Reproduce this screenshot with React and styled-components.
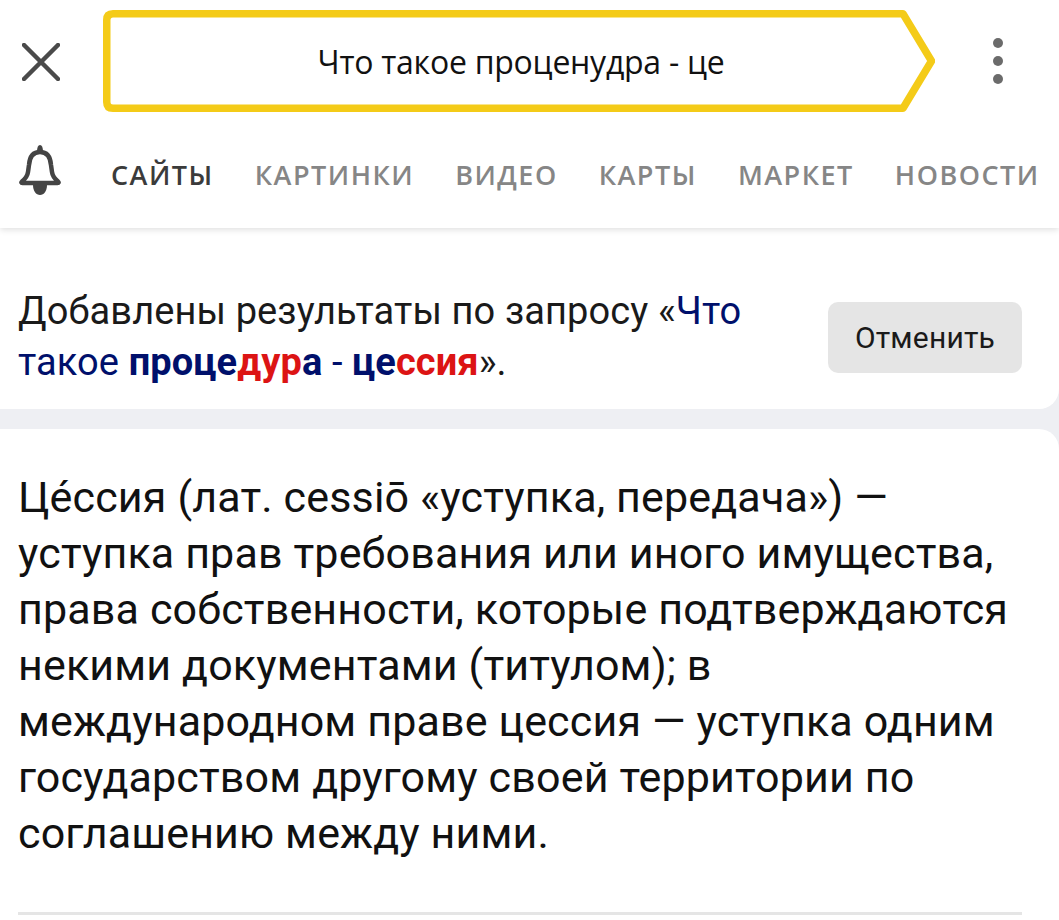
import React from 'react';
import styled, { createGlobalStyle } from 'styled-components';

const GlobalStyle = createGlobalStyle`
  html, body {
    margin: 0;
    padding: 0;
    background: #fff;
    overflow: hidden;
  }
  body {
    font-family: Roboto, "Liberation Sans", sans-serif;
  }
`;

const Page = styled.div`
  width: 1059px;
  height: 920px;
  overflow: hidden;
  background: #eeeff3;
`;

const Header = styled.header`
  position: relative;
  z-index: 1;
  height: 228px;
  background: #fff;
  box-shadow: 0 2px 6px rgba(0, 0, 0, 0.12);
`;

const TopRow = styled.div`
  display: flex;
  align-items: center;
  height: 102px;
  padding: 10px 0 0 22px;
`;

const CloseButton = styled.div`
  display: flex;
  width: 38px;
  height: 38px;
  margin: 2px 43px 0 0;
`;

const SearchBox = styled.div`
  position: relative;
  display: flex;
  align-items: center;
  justify-content: center;
  width: 832px;
  height: 102px;
  padding-left: 4px;
  box-sizing: border-box;
  font-family: "Open Sans", sans-serif;
  font-size: 32px;
  letter-spacing: -0.25px;
  color: #111;
`;

const BoxOutline = styled.svg`
  position: absolute;
  inset: 0;
`;

const Query = styled.span`
  position: relative;
`;

const MenuDots = styled.div`
  display: flex;
  flex-direction: column;
  gap: 8px;
  margin-left: 58px;
`;

const Dot = styled.span`
  width: 10px;
  height: 10px;
  border-radius: 50%;
  background: #6b6b6b;
`;

const TabRow = styled.nav`
  display: flex;
  align-items: center;
  height: 116px;
  padding-left: 19px;
  box-sizing: border-box;
`;

const BellIcon = styled.svg`
  flex: none;
  margin-right: 50px;
`;

const Tabs = styled.div`
  display: flex;
  gap: 41px;
  padding-top: 8px;
`;

const Tab = styled.span`
  font-family: "Open Sans", sans-serif;
  font-size: 27px;
  font-weight: 600;
  letter-spacing: 1.5px;
  white-space: nowrap;
  color: ${(props) => (props.$active ? '#3b3b3b' : '#868686')};
`;

const Notice = styled.section`
  display: flex;
  align-items: center;
  justify-content: space-between;
  height: 181px;
  padding: 38px 37px 0 18px;
  box-sizing: border-box;
  background: #fff;
  border-bottom-right-radius: 20px;
`;

const NoticeText = styled.p`
  margin: -2px 0 0;
  font-size: 38px;
  line-height: 51px;
  letter-spacing: 0.1px;
  color: #1a1a1a;
`;

const Link = styled.span`
  color: #00106b;
`;

const Match = styled.b`
  font-weight: 700;
  color: ${(props) => (props.$miss ? '#dc1414' : '#00106b')};
`;

const CancelButton = styled.button`
  width: 194px;
  height: 71px;
  border: none;
  border-radius: 10px;
  background: #e5e5e5;
  font-family: Roboto, sans-serif;
  font-size: 30px;
  letter-spacing: 0.2px;
  color: #1a1a1a;
`;

const Article = styled.article`
  height: 491px;
  margin-top: 20px;
  padding: 40px 37px 0 18px;
  box-sizing: border-box;
  background: #fff;
  border-top-right-radius: 20px;
`;

const Definition = styled.p`
  margin: 0;
  font-size: 43px;
  line-height: 56px;
  letter-spacing: 0.15px;
  color: #111;
`;

const Divider = styled.hr`
  margin: 51px 0 0;
  border: none;
  height: 3px;
  background: #e5e5e5;
`;

const tabs = ['САЙТЫ', 'КАРТИНКИ', 'ВИДЕО', 'КАРТЫ', 'МАРКЕТ', 'НОВОСТИ'];

const App = () => (
  <Page>
    <GlobalStyle />
    <Header>
      <TopRow>
        <CloseButton>
          <svg width="38" height="38" viewBox="0 0 38 38">
            <path d="M2 2L36 36M36 2L2 36" stroke="#4a4a4a" strokeWidth="4.5" strokeLinecap="round" />
          </svg>
        </CloseButton>
        <SearchBox>
          <BoxOutline width="832" height="102" viewBox="0 0 832 102">
            <path
              d="M10 3.750H800L828.500 51L800 98.250H10Q3.750 98.250 3.750 92V10Q3.750 3.750 10 3.750Z"
              fill="#fff"
              stroke="#f4cb18"
              strokeWidth="7.500"
              strokeLinejoin="round"
            />
          </BoxOutline>
          <Query>Что такое проценудра - це</Query>
        </SearchBox>
        <MenuDots>
          <Dot />
          <Dot />
          <Dot />
        </MenuDots>
      </TopRow>
      <TabRow>
        <BellIcon width="42" height="52" viewBox="0 0 42 52">
          <path
            d="M21 8C13 8 10.500 14 10 21L9 28C8.500 32 6 35 3 37.500Q1.500 39 3.500 39H38.500Q40.500 39 39 37.500C36 35 33.500 32 33 28L32 21C31.500 14 29 8 21 8Z"
            fill="none"
            stroke="#444"
            strokeWidth="4.500"
            strokeLinejoin="round"
          />
          <path d="M18 8Q18 1 21 1Q24 1 24 8Z" fill="#444" />
          <path d="M14 41H28C28 47 25 51 21 51S14 47 14 41Z" fill="#444" />
        </BellIcon>
        <Tabs>
          {tabs.map((tab, index) => (
            <Tab key={tab} $active={index === 0}>
              {tab}
            </Tab>
          ))}
        </Tabs>
      </TabRow>
    </Header>
    <Notice>
      <NoticeText>
        Добавлены результаты по запросу «<Link>Что</Link>
        <br />
        <Link>такое </Link>
        <Match>проце</Match>
        <Match $miss>дур</Match>
        <Match>а</Match>
        <Link> - </Link>
        <Match>це</Match>
        <Match $miss>ссия</Match>».
      </NoticeText>
      <CancelButton>Отменить</CancelButton>
    </Notice>
    <Article>
      <Definition>
        Це́ссия (лат. cessiō «уступка, передача») —
        <br />
        уступка прав требования или иного имущества,
        <br />
        права собственности, которые подтверждаются
        <br />
        некими документами (титулом); в
        <br />
        международном праве цессия — уступка одним
        <br />
        государством другому своей территории по
        <br />
        соглашению между ними.
      </Definition>
      <Divider />
    </Article>
  </Page>
);

export default App;
